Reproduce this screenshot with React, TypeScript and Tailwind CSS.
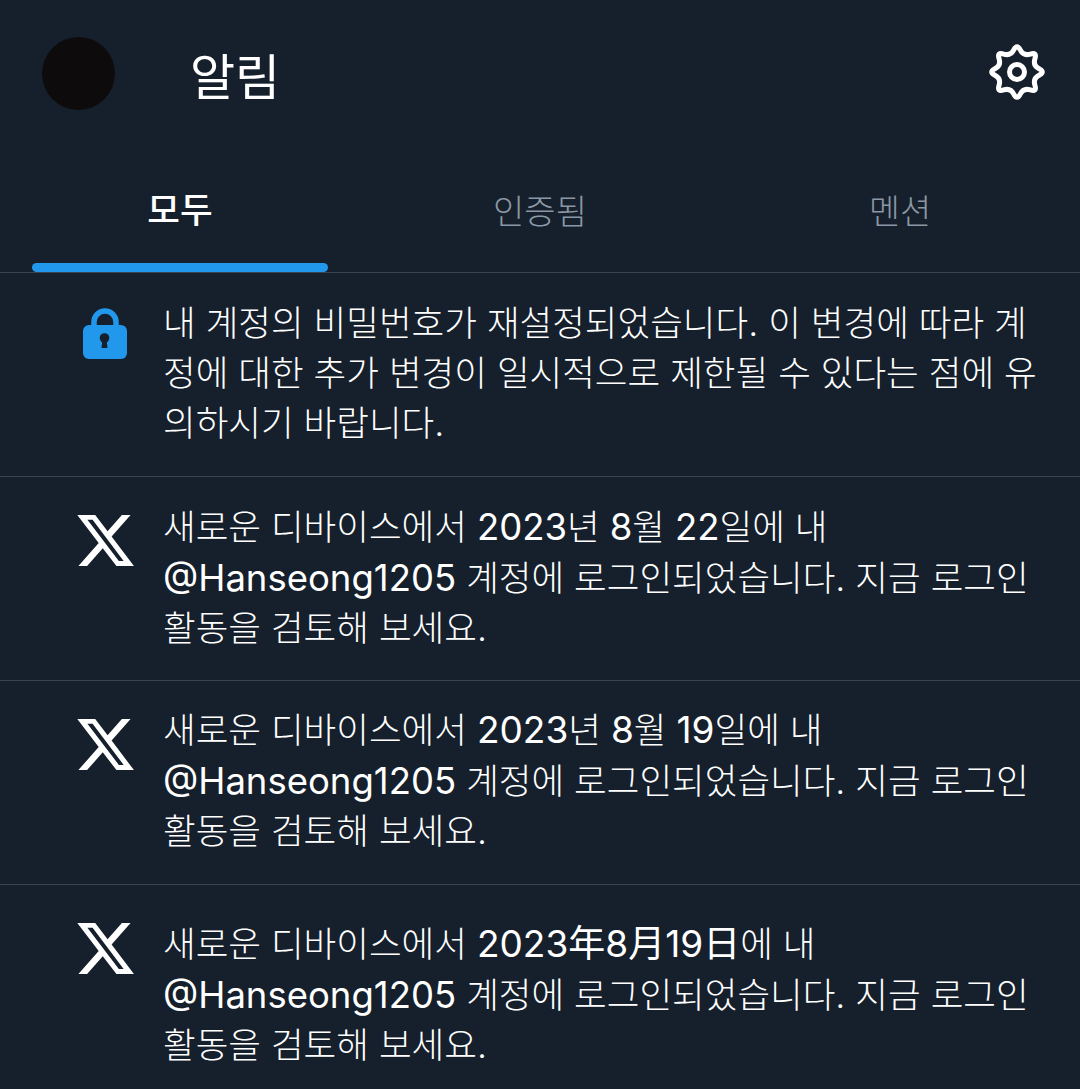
import type { ReactNode } from "react";

const font = { fontFamily: '"Inter", "Noto Sans CJK KR", sans-serif' };

const gearPath = (() => {
  const pts = Array.from({ length: 16 }, (_, i) => {
    const r = i % 2 === 0 ? 28.5 : 17;
    const a = (i * Math.PI) / 8;
    return [28 + r * Math.sin(a), 28 - r * Math.cos(a)];
  });
  const mid = (a: number[], b: number[]) => [(a[0] + b[0]) / 2, (a[1] + b[1]) / 2];
  const start = mid(pts[15], pts[0]);
  let d = `M${start[0].toFixed(2)} ${start[1].toFixed(2)}`;
  pts.forEach((p, i) => {
    const m = mid(p, pts[(i + 1) % 16]);
    d += `Q${p[0].toFixed(2)} ${p[1].toFixed(2)} ${m[0].toFixed(2)} ${m[1].toFixed(2)}`;
  });
  return d + "Z";
})();

function Gear() {
  return (
    <svg viewBox="0 0 56 56" className="w-[56px] h-[56px]" fill="none" stroke="#ffffff" strokeWidth="5" strokeLinejoin="round">
      <path d={gearPath} />
      <circle cx="28" cy="28" r="7.5" />
    </svg>
  );
}

function Lock() {
  return (
    <svg viewBox="0 0 44 52" className="w-[44px] h-[52px] mt-[9px]">
      <path d="M11 22v-8a11 11 0 0 1 22 0v8" fill="none" stroke="#2198ec" strokeWidth="5.5" />
      <rect x="0" y="17" width="44" height="34" rx="6" fill="#2198ec" />
      <circle cx="21.5" cy="30" r="4.8" fill="#16202c" />
      <path d="M19.5 31h4l1 9h-6z" fill="#16202c" />
    </svg>
  );
}

function XLogo() {
  return (
    <svg viewBox="0 0 24 24" className="w-[63px] h-[63px] mt-[6px]" fill="#ffffff">
      <path d="M18.244 2.25h3.308l-7.227 8.26 8.502 11.24H16.17l-5.214-6.817L4.99 21.75H1.68l7.73-8.835L1.254 2.25H8.08l4.713 6.231zm-1.161 17.52h1.833L7.084 4.126H5.117z" />
    </svg>
  );
}

function Row({ icon, lines, last, textClass = "" }: { icon: ReactNode; lines: ReactNode[]; last?: boolean; textClass?: string }) {
  return (
    <div className={`flex h-[204px] pt-[26px] ${last ? "" : "border-b border-[#38444d]"}`}>
      <div className="w-[84px] ml-[63px] mr-[16px] shrink-0 flex justify-center items-start">{icon}</div>
      <div className={`text-[35.5px] leading-[50px] font-light text-white whitespace-nowrap ${textClass}`}>
        {lines.map((l, i) => (
          <div key={i}>{l}</div>
        ))}
      </div>
    </div>
  );
}

const B = ({ children }: { children: ReactNode }) => <span className="font-normal text-[36.5px]">{children}</span>;
const BL = ({ children }: { children: ReactNode }) => <span className="font-normal text-[37px]">{children}</span>;

const login = (d: ReactNode) => [
  <>새로운 디바이스에서 {d}에 내</>,
  <><B>@Hanseong1205</B> 계정에 로그인되었습니다. 지금 로그인</>,
  <>활동을 검토해 보세요.</>,
];

export default function App() {
  return (
    <div className="w-[1080px] h-[1089px] overflow-hidden bg-[#16202c]" style={font}>
      <div className="flex items-center h-[146px] pl-[42px] pr-[35px]">
        <div className="w-[73px] h-[73px] rounded-full bg-[#0d0b0c]" />
        <div className="ml-[75px] mt-[9px] text-[49px] text-white font-normal">알림</div>
        <div className="ml-auto mt-[-2px]"><Gear /></div>
      </div>
      <div className="flex h-[127px] border-b border-[#38444d]">
        {["모두", "인증됨", "멘션"].map((t, i) => (
          <div key={t} className="relative flex-1 flex items-center justify-center pt-[4px]">
            <span className={`${i === 0 ? "text-[35.5px] font-medium text-white" : "text-[34px] font-light text-[#8b98a5]"}`}>{t}</span>
            {i === 0 && <div className="absolute left-[32px] right-[32px] bottom-0 h-[9px] rounded-full bg-[#2198ec]" />}
          </div>
        ))}
      </div>
      <Row icon={<Lock />} lines={["내 계정의 비밀번호가 재설정되었습니다. 이 변경에 따라 계", "정에 대한 추가 변경이 일시적으로 제한될 수 있다는 점에 유", "의하시기 바랍니다."]} />
      <Row icon={<XLogo />} textClass="mt-[-1px]" lines={login(<><B>2023</B>년 <B>8</B>월 <B>22</B>일</>)} />
      <Row icon={<XLogo />} textClass="mt-[-2px]" lines={login(<><BL>2023</BL>년 <BL>8</BL>월 <BL>19</BL>일</>)} />
      <Row icon={<XLogo />} textClass="mt-[8px]" lines={login(<BL>2023年8月19日</BL>)} last />
    </div>
  );
}
